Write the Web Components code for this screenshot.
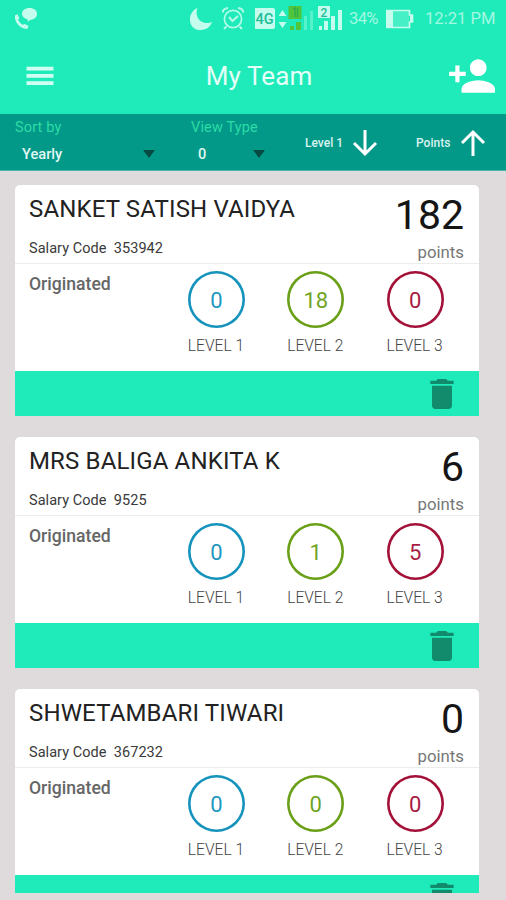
<!DOCTYPE html>
<html lang="en">
<head>
<meta charset="utf-8">
<meta name="viewport" content="width=device-width, initial-scale=1">
<title>My Team</title>
<style>
  html, body { margin: 0; height: 100%; }
  body { background: #dfdbdc; font-family: Roboto, 'Liberation Sans', sans-serif; overflow: hidden; }
</style>
</head>
<body>
<team-app></team-app>

<script>
function makeTemplate(html) {
  const template = document.createElement('template');
  template.innerHTML = html;
  return template;
}

class BaseElement extends HTMLElement {
  constructor() {
    super();
    this.attachShadow({ mode: 'open' });
    this.shadowRoot.appendChild(this.constructor.template.content.cloneNode(true));
  }

  setText(selector, value) {
    this.shadowRoot.querySelector(selector).textContent = value;
  }
}

class StatusBar extends BaseElement {
  static template = makeTemplate(`
    <style>
      :host { display: flex; align-items: center; height: 37px; box-sizing: border-box; padding: 0 10px 0 14px; color: #a4f8e2; font-size: 16.600px; }
      svg { display: block; flex: none; fill: #c4fcee; }
      .spacer { flex: 1; }
      .battery-level { margin-left: 6px; width: 33px; letter-spacing: -0.700px; white-space: nowrap; }
      .clock { margin-left: 11px; width: 71px; white-space: nowrap; }
      .moon { margin-right: 8px; }
      .alarm { margin-right: 9px; }
      .data { margin-right: 3px; }
      .battery { margin-left: 4px; }
    </style>
    <svg width="24" height="24" viewBox="0 0 24 24">
      <path d="M15.500 2C20 2 23 4.300 23 7.800s-3 6-6.500 6l-2.600 2-.5-2.600C10.300 12.500 8 10.700 8 7.800 8 4.300 11 2 15.500 2z" transform="translate(0 -1)"/>
      <path d="M1 8.300l2.600-1.100 1.700 4-1.200 1.500c1 2 2.400 3.700 4.500 5l2-.7 3.900 1.700-1 3.100C7.500 22.800 0 16 1 8.300z"/>
    </svg>
    <span class="spacer"></span>
    <svg class="moon" width="24" height="24" viewBox="0 0 24 24"><path d="M8.500 1C-3 6-1 23 11.500 23c5.500 0 10-3 11.500-8C14 19 4.500 11 8.500 1z" transform="translate(-1 0)"/></svg>
    <svg class="alarm" width="24" height="24" viewBox="0 0 24 24" style="fill:none;stroke:#b4fbe9;stroke-width:1.700">
      <g transform="translate(-1 -1)"><circle cx="12" cy="13" r="8.600"/><path d="M1.500 6.500C2 3.800 4 2.300 7 2M22.500 6.500C22 3.800 20 2.300 17 2M5.500 20.500L3 23M18.500 20.500L21 23M8 11l3.500 4 5.500-5" stroke-width="2"/></g>
    </svg>
    <svg class="data" width="21" height="21" viewBox="0 0 21 21"><rect x="-1" width="21" height="21" rx="2"/><text x="0.500" y="15.500" font-size="14.500" font-weight="500" fill="#21bd97">4G</text></svg>
    <svg width="64" height="26" viewBox="0 0 64 26">
      <path d="M-.5 10l4-6 4 6zM-.5 16l4 6 4-6z"/>
      <g fill="#50c43b"><path d="M9.500 0h13v13h-13z"/><path d="M11 20h4v4h-4zM17 16h5v8h-5z"/></g>
      <path d="M14 3l2-1v9M18.500 2v9" fill="none" stroke="#29a852" stroke-width="1.200"/>
      <path d="M25 10h3v14h-3zM31 5h3v19h-3z" opacity=".35"/>
      <path d="M39 0h12v12H39zM40 20h3v4h-3zM45 15h4v9h-4zM52 10h4v14h-4zM59 4h4v20h-4z"/>
      <text x="41.500" y="10.500" font-size="12" font-weight="500" fill="#21bd97">2</text>
    </svg>
    <span class="battery-level">34%</span>
    <svg class="battery" width="28" height="20" viewBox="0 0 28 20"><path d="M.8 1.500h22.700v4.500h3v7h-3v5.500H.8z" fill="none" stroke="#c4fcee" stroke-width="1.700"/><path d="M1 2h6v16H1zM24 6h3v7h-3z"/><path d="M7 2h16v16H7z" opacity=".25"/></svg>
    <span class="clock">12:21 PM</span>
  `);
}

class AppBar extends BaseElement {
  static template = makeTemplate(`
    <style>
      :host { display: grid; grid-template-columns: 100px 1fr 100px; align-items: center; height: 77px; box-sizing: border-box; padding: 0 9px 0 22px; color: #e2fff8; }
      h1 { margin: 0 0 0 -1px; text-align: center; font-size: 26px; font-weight: 400; line-height: 36px; letter-spacing: 0.100px; white-space: nowrap; }
      svg { display: block; fill: #d2fff4; }
      .add { justify-self: end; fill: #fff; }
    </style>
    <svg width="36" height="36" viewBox="0 0 24 24"><path d="M3 18h18v-2.500H3zm0-4.900h18v-2.400H3zM3 5.800v2.500h18V5.800z"/></svg>
    <h1><slot></slot></h1>
    <svg class="add" width="50" height="50" viewBox="0 0 24 24"><path d="M15 12c2.210 0 4-1.790 4-4s-1.790-4-4-4-4 1.790-4 4 1.790 4 4 4zm-9-2V7H4v3H1v2h3v3h2v-3h3v-2H6zm9 4c-2.670 0-8 1.340-8 4v2h16v-2c0-2.660-5.330-4-8-4z"/></svg>
  `);
}

class SpinnerField extends BaseElement {
  static template = makeTemplate(`
    <style>
      :host { display: block; padding-top: 4px; }
      .label { font-size: 14.500px; line-height: 20px; color: #2cdca6; white-space: nowrap; letter-spacing: 0.150px; }
      .value { display: flex; align-items: center; justify-content: space-between; padding: 0 9px 0 7px; margin-top: 6px; font-size: 14.600px; line-height: 20px; font-weight: 500; color: #e0f7f3; }
      .caret { border: 6.500px solid transparent; border-top: 8px solid #054b43; border-bottom: 0; }
    </style>
    <div class="label"></div>
    <div class="value"><slot></slot><span class="caret"></span></div>
  `);

  connectedCallback() {
    this.setText('.label', this.getAttribute('label'));
  }
}

class SortButton extends BaseElement {
  static template = makeTemplate(`
    <style>
      :host { display: flex; align-items: center; padding-top: 1px; font-size: 12px; font-weight: 500; color: #d9f3ef; white-space: nowrap; }
      svg { display: block; margin-left: auto; fill: none; stroke: #fff; stroke-width: 3; }
      :host([direction="up"]) svg { transform: rotate(180deg); }
    </style>
    <slot></slot>
    <svg width="26" height="28" viewBox="0 0 26 28"><path d="M13 1v24M2 14l11 11 11-11"/></svg>
  `);
}

class FilterBar extends BaseElement {
  static template = makeTemplate(`
    <style>
      :host { display: flex; height: 57px; box-sizing: border-box; padding-left: 15px; background: #029989; border-bottom: 1px solid #4bb5aa; }
      .sort { width: 149px; }
      .view { margin-left: 27px; width: 83px; }
      .level { margin-left: 31px; width: 73px; }
      .points { margin-left: 38px; width: 70px; }
    </style>
    <spinner-field class="sort" label="Sort by">Yearly</spinner-field>
    <spinner-field class="view" label="View Type">0</spinner-field>
    <sort-button class="level" direction="down">Level 1</sort-button>
    <sort-button class="points" direction="up">Points</sort-button>
  `);
}

class LevelCircle extends BaseElement {
  static template = makeTemplate(`
    <style>
      :host { display: block; width: 57px; text-align: center; }
      .ring { display: flex; align-items: center; justify-content: center; box-sizing: border-box; width: 57px; height: 57px; box-shadow: inset 0 0 0 2.600px; border-radius: 50%; font-size: 22px; padding-top: 2px; }
      .ring span { opacity: .95; }
      .name { margin: 8px -4px 0 -5px; font-size: 15.600px; line-height: 20px; font-weight: 300; color: #444; white-space: nowrap; }
    </style>
    <div class="ring"><span></span></div>
    <div class="name"><slot></slot></div>
  `);

  connectedCallback() {
    this.setText('.ring span', this.getAttribute('count'));
    this.shadowRoot.querySelector('.ring').style.color = this.getAttribute('color');
  }
}

class MemberCard extends BaseElement {
  static template = makeTemplate(`
    <style>
      :host { display: block; flex: none; width: 464px; height: 231px; background: #fff; border-radius: 5px 5px 0 0; }
      .top { display: flex; justify-content: space-between; height: 79px; box-sizing: border-box; padding: 0 15px 0 14px; border-bottom: 1px solid #ececec; }
      h2 { margin: 10px 0 0; font-size: 24px; line-height: 28px; font-weight: 400; letter-spacing: 0.150px; color: #222; white-space: nowrap; }
      .code { margin-top: 16px; font-size: 14.500px; line-height: 20px; color: #3a3a3a; letter-spacing: 0.050px; white-space: pre; }
      .score { text-align: right; }
      .total { margin-top: 6px; font-size: 41px; line-height: 48px; font-weight: 400; color: #151515; }
      .unit { margin-top: 3px; font-size: 16.800px; line-height: 20px; color: #777; }
      .middle { display: flex; height: 107px; box-sizing: border-box; padding: 7px 0 0 14px; }
      .origin { width: 159px; padding-top: 3px; font-size: 17.600px; line-height: 20px; font-weight: 500; color: #666; }
      .levels { display: flex; gap: 42.300px; }
      .bottom { display: flex; justify-content: flex-end; height: 45px; box-sizing: border-box; padding: 3px 17px 0 0; background: #1eebb9; }
      svg { display: block; fill: #128a6c; }
    </style>
    <div class="top">
      <div>
        <h2></h2>
        <div class="code"></div>
      </div>
      <div class="score">
        <div class="total"></div>
        <div class="unit">points</div>
      </div>
    </div>
    <div class="middle">
      <div class="origin">Originated</div>
      <div class="levels"></div>
    </div>
    <div class="bottom">
      <svg width="40" height="40" viewBox="0 0 24 24"><path d="M6 19c0 1.100.9 2 2 2h8c1.100 0 2-.9 2-2V7H6v12zM19 4h-3.500l-1-1h-5l-1 1H5v2h14V4z"/></svg>
    </div>
  `);

  set member(member) {
    const colors = ['#1593bd', '#6a9f18', '#a31139'];
    this.setText('h2', member.name);
    this.setText('.code', `Salary Code  ${member.code}`);
    this.setText('.total', member.points);
    this.shadowRoot.querySelector('.levels').innerHTML = member.levels.map((count, i) => `
      <level-circle count="${count}" color="${colors[i]}">LEVEL ${i + 1}</level-circle>
    `).join('');
  }
}

class TeamApp extends BaseElement {
  static template = makeTemplate(`
    <style>
      :host { display: block; width: 506px; height: 900px; overflow: hidden; }
      header { background: #1eebb9; }
      .list { display: flex; flex-direction: column; gap: 21px; height: 722px; box-sizing: border-box; padding: 14px 0 0 15px; overflow: hidden; }
    </style>
    <header>
      <status-bar></status-bar>
      <app-bar>My Team</app-bar>
    </header>
    <filter-bar></filter-bar>
    <div class="list"></div>
  `);

  connectedCallback() {
    const members = [
      { name: 'SANKET SATISH VAIDYA', code: '353942', points: 182, levels: [0, 18, 0] },
      { name: 'MRS BALIGA ANKITA K', code: '9525', points: 6, levels: [0, 1, 5] },
      { name: 'SHWETAMBARI TIWARI', code: '367232', points: 0, levels: [0, 0, 0] }
    ];
    const list = this.shadowRoot.querySelector('.list');
    members.forEach(member => {
      const card = document.createElement('member-card');
      card.member = member;
      list.appendChild(card);
    });
  }
}

customElements.define('status-bar', StatusBar);
customElements.define('app-bar', AppBar);
customElements.define('spinner-field', SpinnerField);
customElements.define('sort-button', SortButton);
customElements.define('filter-bar', FilterBar);
customElements.define('level-circle', LevelCircle);
customElements.define('member-card', MemberCard);
customElements.define('team-app', TeamApp);
</script>
</body>
</html>
